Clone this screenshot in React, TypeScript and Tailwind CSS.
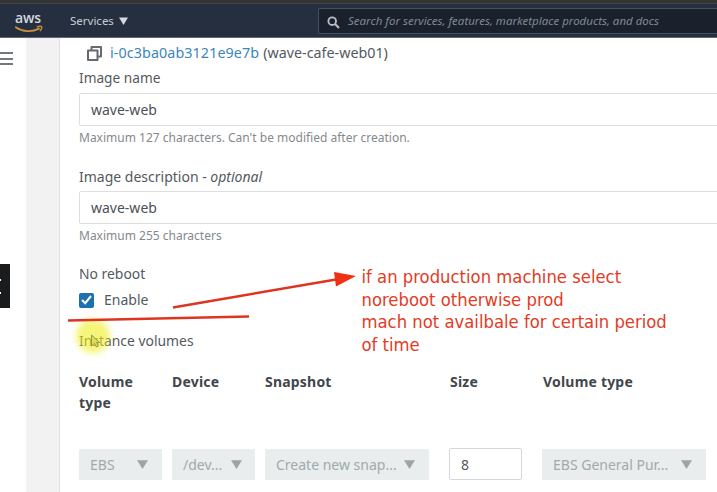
import type { ReactNode } from "react";

const ember = "font-['Noto_Sans','Open_Sans',sans-serif]";

function Caret({ className }: { className: string }) {
  return (
    <svg viewBox="0 0 11 9" className={`h-[9px] w-[11px] shrink-0 ${className}`}>
      <path d="M0 .3h11L5.500 9z" fill="currentColor" />
    </svg>
  );
}

function AwsLogo() {
  return (
    <div className="ml-[15px] mt-[5px] h-[26px] w-[28px]">
      <div className="h-[15px] whitespace-nowrap font-['Open_Sans',sans-serif] text-[14px] font-semibold leading-[17px] tracking-[-0.1px] text-[#d3d8df]">
        aws
      </div>
      <svg viewBox="0 0 28 8" className="mt-[1px] block h-[8px] w-[28px]">
        <path d="M.8 2.200C7.500 6.900 17 7.400 24 3.600" fill="none" stroke="#c98e3d" strokeWidth="1.800" strokeLinecap="round" />
        <path d="M21.700 2.100c2-.9 4.400-.8 4.900-.3.3.9-.4 3-1.600 4.200" fill="none" stroke="#c98e3d" strokeWidth="1.400" />
      </svg>
    </div>
  );
}

function TextField({ value }: { value: string }) {
  return (
    <div className="-mr-1 flex h-[33px] items-center rounded-[2px] border border-[#dcdfe1] bg-white pl-[11px] text-[14px] text-[#4b5157]">
      {value}
    </div>
  );
}

function Select({ children, className, caret }: { children: ReactNode; className: string; caret: string }) {
  return (
    <div className={`flex h-[31px] shrink-0 items-center justify-between whitespace-nowrap rounded-[1px] bg-[#eaeded] pl-[11px] text-[14px] text-[#a0aaad] ${className}`}>
      <span>{children}</span>
      <Caret className={`text-[#9aa5a7] ${caret}`} />
    </div>
  );
}

export default function App() {
  return (
    <div className={`relative h-[492px] w-[717px] overflow-hidden bg-white text-[#54595e] ${ember}`}>
      <header className="flex h-[38px] w-full flex-col border-b border-[#5f6a76] bg-[#252f3f]">
        <div className="h-[4px] shrink-0 border-b border-[#414448] bg-[#323333]" />
        <div className="flex h-[33px] items-start">
          <AwsLogo />
          <div className="ml-[27px] flex h-[33px] items-center text-[11.500px] text-[#c8cdd3]">
            <span className="w-[49px] whitespace-nowrap">Services</span>
            <svg viewBox="0 0 9 8" className="h-[8px] w-[9px]">
              <path d="M0 .5h9L4.500 8z" fill="#d5d9de" />
            </svg>
          </div>
          <div className="ml-[190px] mt-[4px] flex h-[26px] flex-1 items-center rounded-l-[2px] border border-r-0 border-[#435060] bg-[#1a202c]">
            <svg viewBox="0 0 13 13" className="ml-[8px] mt-[2px] h-[13px] w-[13px]">
              <circle cx="5.200" cy="5.200" r="3.800" fill="none" stroke="#b8bec3" strokeWidth="1.900" />
              <path d="m8 8 4 4" stroke="#b8bec3" strokeWidth="2.200" />
            </svg>
            <span className="ml-[8px] whitespace-nowrap text-[11.500px] italic leading-[16px] text-[#7f8b90]">
              Search for services, features, marketplace products, and docs
            </span>
          </div>
        </div>
      </header>

      <div className="flex h-[454px]">
        <aside className="w-[26px] shrink-0 bg-white">
          <div className="flex h-[28px] w-[12.500px] flex-col gap-[4px] pt-[14px]">
            <i className="h-[2px] shrink-0 bg-[#74777c]" />
            <i className="h-[2px] shrink-0 bg-[#74777c]" />
            <i className="-mt-px h-[2px] shrink-0 bg-[#74777c]" />
          </div>
          <div className="mt-[198px] flex h-[44px] w-[10px] flex-col justify-center gap-[11px] bg-[#191b1c]">
            <i className="h-[2px] w-[1px] bg-white" />
            <i className="h-[2px] w-[1px] bg-white" />
          </div>
        </aside>
        <div className="w-[33px] shrink-0 bg-[#f2f2f2]" />

        <main className="min-w-0 flex-1 border-l border-[#dfe0e1] bg-white pl-[19px]">
          <div className="flex h-[30px] items-center whitespace-nowrap pl-[8px] text-[14.300px]">
            <svg viewBox="0 0 15 15" className="mr-[8px] h-[15px] w-[15px]" fill="none" stroke="#666a70" strokeWidth="2" strokeLinejoin="round">
              <path d="M4.500 4V1H14v9.500h-3" />
              <path d="M1 4.500h9.500V14H1z" />
            </svg>
            <span className="tracking-[0.1px] text-[#3b86bd]">i-0c3ba0ab3121e9e7b</span>
            <span className="ml-[4px]">(wave-cafe-web01)</span>
          </div>
          <div className="mb-[5px] h-[20px] text-[13.700px] leading-[20px]">Image name</div>
          <TextField value="wave-web" />
          <div className="mt-[3px] h-[18px] text-[12px] leading-[18px] text-[#85898e]">
            Maximum 127 characters. Can't be modified after creation.
          </div>
          <div className="mb-[4px] mt-[20px] h-[20px] text-[14px] leading-[20px]">
            Image description - <em>optional</em>
          </div>
          <TextField value="wave-web" />
          <div className="mt-[3px] h-[18px] text-[12px] leading-[18px] text-[#85898e]">Maximum 255 characters</div>
          <div className="mt-[19px] h-[20px] text-[13.900px] leading-[20px]">No reboot</div>
          <div className="mt-[6px] flex h-[20px] items-center text-[14px]">
            <span className="flex h-[15px] w-[15px] items-center justify-center rounded-[2px] bg-[#1c72b0]">
              <svg viewBox="0 0 11 10" className="h-[10px] w-[11px]">
                <path d="m1 5 3.200 3.200L10 1" fill="none" stroke="white" strokeWidth="2" />
              </svg>
            </span>
            <span className="ml-[10px] leading-[18px] -mt-px">Enable</span>
          </div>
          <div className="mt-[21px] h-[20px] text-[13.900px] leading-[20px]">Instance volumes</div>
          <div className="mt-[20px] flex h-[77px] text-[14px] font-bold leading-[21px] tracking-[0.2px] text-[#42474c]">
            <div className="w-[93px] shrink-0 pr-[20px]">Volume type</div>
            <div className="w-[93px] shrink-0">Device</div>
            <div className="w-[185px] shrink-0">Snapshot</div>
            <div className="w-[93px] shrink-0">Size</div>
            <div className="whitespace-nowrap">Volume type</div>
          </div>
          <div className="flex items-center">
            <Select className="mr-[10px] w-[83px]" caret="mr-[14px]">EBS</Select>
            <Select className="mr-[10px] w-[83px]" caret="mr-[13px]">/dev...</Select>
            <Select className="mr-[20px] w-[164px]" caret="mr-[14px]">Create new snap...</Select>
            <div className="mr-[20px] flex h-[32px] w-[73px] shrink-0 items-center rounded-[2px] border border-[#d5d9dc] bg-white pl-[11px] text-[14px]">8</div>
            <Select className="w-[164px]" caret="mr-[14px]">EBS General Pur...</Select>
          </div>
        </main>
      </div>

      {/* Hand-drawn annotations laid over the form */}
      <div className="absolute left-[76px] top-[319px] h-[34px] w-[34px] rounded-full bg-[#eeee20]/60 blur-[3px]" />
      <svg viewBox="0 0 717 492" className="pointer-events-none absolute inset-0 h-[492px] w-[717px]">
        <path d="M91.500 335v11l3-2.500 2 3.500 2-1-2-3.500h3.200z" fill="#dede55" stroke="#98984a" strokeWidth="1" />
        <path d="M68 320.500 249 316.500" stroke="#df3420" strokeWidth="2.600" />
        <path d="M173 307.500 336 279.500" stroke="#df3420" strokeWidth="2.400" />
        <path d="m334 272 22 4-20 10.500z" fill="#ef3012" />
      </svg>
      <div className="absolute left-[361.500px] top-[266px] whitespace-nowrap font-['DejaVu_Sans_Condensed','DejaVu_Sans',sans-serif] text-[18.300px] leading-[22.500px] text-[#e23c25]">
        <div>if an production machine select</div>
        <div>noreboot otherwise prod</div>
        <div>mach not availbale for certain period</div>
        <div>of time</div>
      </div>
    </div>
  );
}
